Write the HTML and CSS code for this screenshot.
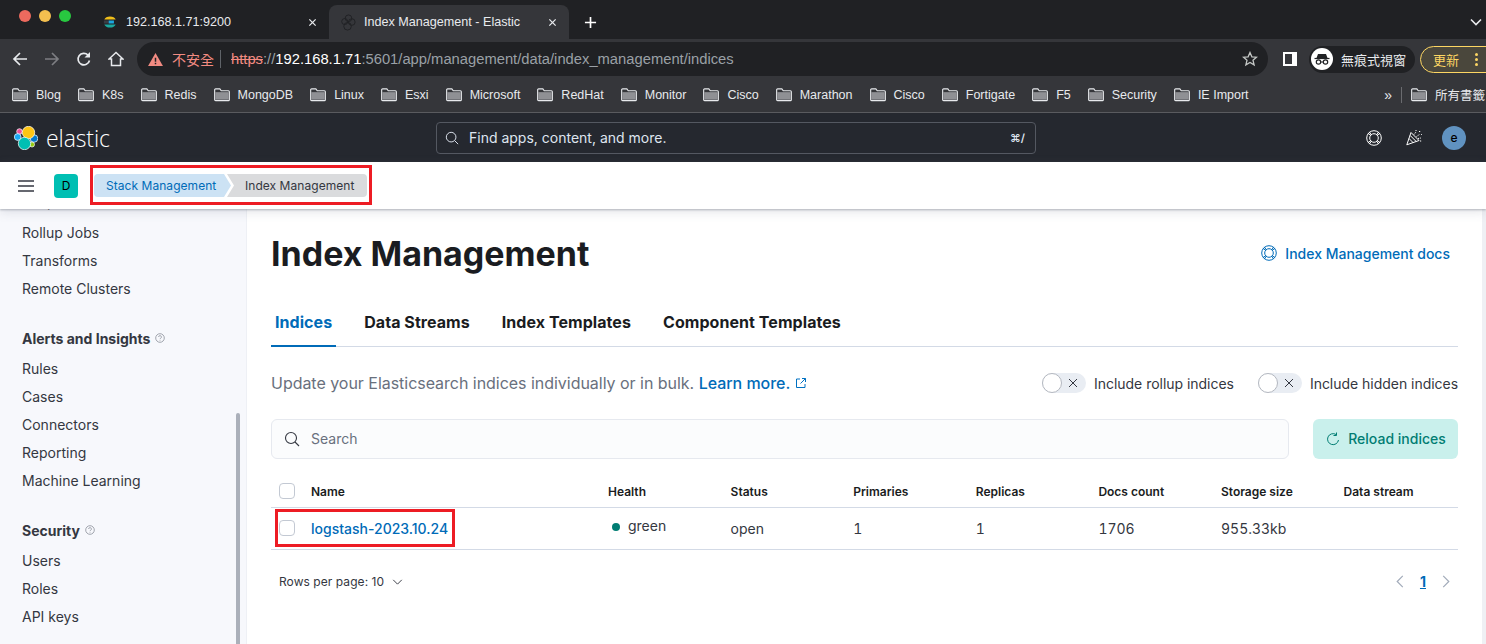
FILE: index.html
```html
<!DOCTYPE html>
<html lang="zh-Hant">
<head>
  <meta charset="UTF-8">
  <title>Index Management - Elastic</title>
  <link rel="stylesheet" href="styles.css">
</head>
<body>
  <!-- browser chrome -->
  <div class="tabbar">
    <div class="lights"><span class="light red"></span><span class="light yellow"></span><span class="light green"></span></div>
    <div class="tab">
      <svg class="favicon" viewBox="0 0 16 16"><path d="M1.500 5.200a6.800 5 0 0 1 13 0z" fill="#f0bf1a"/><path d="M1.500 10.800a6.800 5 0 0 0 13 0z" fill="#1ba9a0"/><path d="M1 6.300h5.500v3.400H1z" fill="#3a3d44"/><path d="M6.500 6.300h6v3.400h-6z" fill="#1ca6e0"/></svg>
      <span class="tab-title">192.168.1.71:9200</span>
      <svg class="tab-close" viewBox="0 0 10 10"><path d="M1.5 1.5l7 7M8.500 1.500l-7 7" stroke="#e8eaed" stroke-width="1.400"/></svg>
    </div>
    <div class="tab active">
      <svg class="favicon" viewBox="0 0 18 18" fill="none" stroke="#202124" stroke-width="1"><circle cx="9" cy="4.500" r="3.500"/><circle cx="5" cy="8" r="3.200"/><circle cx="12.500" cy="8.500" r="3.500"/><circle cx="8" cy="13" r="4"/></svg>
      <span class="tab-title">Index Management - Elastic</span>
      <svg class="tab-close" viewBox="0 0 10 10"><path d="M1.5 1.5l7 7M8.500 1.500l-7 7" stroke="#e8eaed" stroke-width="1.400"/></svg>
    </div>
    <svg class="new-tab" viewBox="0 0 14 14"><path d="M7 1v12M1 7h12" stroke="#fff" stroke-width="1.800"/></svg>
    <svg class="tab-menu" viewBox="0 0 12 8"><path d="M1 1.500l5 5 5-5" fill="none" stroke="#e8eaed" stroke-width="1.600"/></svg>
  </div>

  <div class="toolbar">
    <svg class="nav-icon" viewBox="0 0 16 16"><path d="M15 8H2M8 2L2 8l6 6" fill="none" stroke="#e8eaed" stroke-width="1.700"/></svg>
    <svg class="nav-icon" viewBox="0 0 16 16"><path d="M1 8h13M8 2l6 6-6 6" fill="none" stroke="#7d7e82" stroke-width="1.700"/></svg>
    <svg class="nav-icon" viewBox="0 0 16 16"><path d="M13.500 9.500A5.800 5.800 0 1 1 12 4" fill="none" stroke="#e8eaed" stroke-width="1.700"/><path d="M14 1v5.500H8.500z" fill="#e8eaed"/></svg>
    <svg class="nav-icon" viewBox="0 0 16 16"><path d="M8 1.500L1 8h2.500v6.500h9V8H15z" fill="none" stroke="#e8eaed" stroke-width="1.500"/></svg>
    <div class="omnibox">
      <svg class="warn" viewBox="0 0 16 14"><path d="M8 0l8 14H0z" fill="#f28b82"/><path d="M7.200 5h1.600v4.500H7.200zM7.200 10.500h1.600V12H7.200z" fill="#202124"/></svg>
      <span class="not-secure">不安全</span>
      <span class="omni-sep"></span>
      <span class="url"><s class="https">https</s>://<b class="host">192.168.1.71</b>:5601/app/management/data/index_management/indices</span>
      <svg class="star" viewBox="0 0 16 16"><path d="M8 1.500l1.900 4.300 4.600.4-3.500 3 1.100 4.600L8 11.400l-4.100 2.400L5 9.200l-3.500-3 4.600-.4z" fill="none" stroke="#c4c7c5" stroke-width="1.300"/></svg>
    </div>
    <svg class="panel-icon" viewBox="0 0 14 14"><path d="M0 0h14v14H0z" fill="#fff"/><path d="M2 2h7v10H2z" fill="#35363a"/></svg>
    <div class="incognito">
      <svg class="incognito-icon" viewBox="0 0 22 22"><circle cx="11" cy="11" r="11" fill="#fff"/><path d="M7 6h8l1.500 4h-11z" fill="#202124"/><path d="M3.500 10.500h15" stroke="#202124" stroke-width="1.200"/><circle cx="7.500" cy="14" r="2.200" fill="none" stroke="#202124" stroke-width="1.200"/><circle cx="14.500" cy="14" r="2.200" fill="none" stroke="#202124" stroke-width="1.200"/><path d="M9.700 14h2.600" stroke="#202124"/></svg>
      <span>無痕式視窗</span>
    </div>
    <div class="update">
      <span>更新</span>
      <span class="dots"><i></i><i></i><i></i></span>
    </div>
  </div>

  <div class="bookmarks">
    <span class="bm"><svg class="folder"><use href="#folder"/></svg>Blog</span>
    <span class="bm"><svg class="folder"><use href="#folder"/></svg>K8s</span>
    <span class="bm"><svg class="folder"><use href="#folder"/></svg>Redis</span>
    <span class="bm"><svg class="folder"><use href="#folder"/></svg>MongoDB</span>
    <span class="bm"><svg class="folder"><use href="#folder"/></svg>Linux</span>
    <span class="bm"><svg class="folder"><use href="#folder"/></svg>Esxi</span>
    <span class="bm"><svg class="folder"><use href="#folder"/></svg>Microsoft</span>
    <span class="bm"><svg class="folder"><use href="#folder"/></svg>RedHat</span>
    <span class="bm"><svg class="folder"><use href="#folder"/></svg>Monitor</span>
    <span class="bm"><svg class="folder"><use href="#folder"/></svg>Cisco</span>
    <span class="bm"><svg class="folder"><use href="#folder"/></svg>Marathon</span>
    <span class="bm"><svg class="folder"><use href="#folder"/></svg>Cisco</span>
    <span class="bm"><svg class="folder"><use href="#folder"/></svg>Fortigate</span>
    <span class="bm"><svg class="folder"><use href="#folder"/></svg>F5</span>
    <span class="bm"><svg class="folder"><use href="#folder"/></svg>Security</span>
    <span class="bm"><svg class="folder"><use href="#folder"/></svg>IE Import</span>
    <span class="bm-more">»</span>
    <span class="bm-sep"></span>
    <span class="bm"><svg class="folder"><use href="#folder"/></svg>所有書籤</span>
  </div>

  <svg class="defs">
    <symbol id="folder" viewBox="0 0 17 15">
      <path d="M.7 2.500a1 1 0 0 1 1-1h4.500l1.500 2h7.600a1 1 0 0 1 1 1v8.500a1 1 0 0 1-1 1H1.700a1 1 0 0 1-1-1z" fill="none" stroke="#e8eaed" stroke-width="1.200"/>
      <path d="M1.300 5h14.400v8H1.300z" fill="#8f9094"/>
    </symbol>
    <symbol id="ring" viewBox="0 0 16 16">
      <g fill="none" stroke="currentColor" stroke-width="1">
        <circle cx="8" cy="8" r="7.300"/>
        <circle cx="8" cy="8" r="4.300"/>
        <path d="M3.200 1.900l2.400 3.100M12.800 1.900l-2.400 3.100M3.200 14.100l2.400-3.100M12.800 14.100l-2.400-3.100M1.900 3.200l3.100 2.400M14.100 3.200l-3.100 2.400M1.900 12.800l3.100-2.400M14.100 12.800l-3.100-2.400"/>
      </g>
    </symbol>
    <symbol id="help" viewBox="0 0 10 10">
      <circle cx="5" cy="5" r="4.300" fill="none" stroke="#8a8f99" stroke-width=".8"/>
      <path d="M3.600 4a1.400 1.400 0 1 1 2 1.300c-.4.200-.6.400-.6.900M5 7.200v.6" fill="none" stroke="#8a8f99" stroke-width=".8"/>
    </symbol>
  </svg>

  <!-- kibana -->
  <header class="kbn-header">
    <div class="brand">
      <svg class="logo" viewBox="0 0 24 24" stroke="#fff" stroke-width=".7">
        <circle cx="5.500" cy="5.500" r="2.800" fill="#f04e98"/>
        <circle cx="3.700" cy="11" r="3.400" fill="#1ba9f5"/>
        <circle cx="20" cy="12.500" r="3.800" fill="#0077cc"/>
        <circle cx="14.500" cy="6.500" r="6.200" fill="#fec514"/>
        <circle cx="18" cy="18.500" r="2.500" fill="#93c90e"/>
        <circle cx="10.500" cy="17.500" r="6.200" fill="#00bfb3"/>
      </svg>
      <span class="wordmark">elastic</span>
    </div>
    <div class="global-search">
      <svg class="search-icon" viewBox="0 0 16 16"><circle cx="7" cy="7" r="5.500" fill="none" stroke="#dfe5ef" stroke-width="1.100"/><path d="M11 11l4 4" stroke="#dfe5ef" stroke-width="1.100"/></svg>
      <span class="global-placeholder">Find apps, content, and more.</span>
      <span class="shortcut">⌘/</span>
    </div>
    <div class="header-icons">
      <svg class="hdr-icon"><use href="#ring"/></svg>
      <svg class="hdr-icon" viewBox="0 0 16 16" fill="none" stroke="#fff" stroke-width="1"><path d="M.8 14.800L5 2.500l8 8zM3 8.500l4.500 4.500M4.200 5.500l6 6"/><path d="M8 4.500L10 2M10.500 6.500l3-2M12 8.500l3-.5M9.500.5h1M13 1.500h1.500M15 4.500h.8M14 11h1.500" stroke-dasharray="1.200 1"/></svg>
      <span class="avatar">e</span>
    </div>
  </header>

  <div class="crumb-bar">
    <svg class="burger" viewBox="0 0 16 12"><path d="M0 1h16M0 6h16M0 11h16" stroke="#343741" stroke-width="1.600"/></svg>
    <span class="space-badge">D</span>
    <div class="crumb-frame">
      <span class="crumb first">Stack Management</span>
      <span class="crumb last">Index Management</span>
    </div>
  </div>

  <div class="app">
    <nav class="sidenav">
      <a class="nav-item clipped">Snapshot and Restore</a>
      <a class="nav-item">Rollup Jobs</a>
      <a class="nav-item">Transforms</a>
      <a class="nav-item">Remote Clusters</a>
      <div class="nav-heading">Alerts and Insights <svg class="help"><use href="#help"/></svg></div>
      <a class="nav-item">Rules</a>
      <a class="nav-item">Cases</a>
      <a class="nav-item">Connectors</a>
      <a class="nav-item">Reporting</a>
      <a class="nav-item">Machine Learning</a>
      <div class="nav-heading">Security <svg class="help"><use href="#help"/></svg></div>
      <a class="nav-item">Users</a>
      <a class="nav-item">Roles</a>
      <a class="nav-item">API keys</a>
      <span class="nav-scroll"></span>
    </nav>

    <main class="content">
      <div class="title-row">
        <h1>Index Management</h1>
        <a class="docs-link"><svg class="docs-icon"><use href="#ring"/></svg>Index Management docs</a>
      </div>

      <div class="tabs">
        <span class="page-tab selected">Indices</span>
        <span class="page-tab">Data Streams</span>
        <span class="page-tab">Index Templates</span>
        <span class="page-tab">Component Templates</span>
      </div>

      <div class="desc-row">
        <p class="desc">Update your Elasticsearch indices individually or in bulk. <a class="learn">Learn more.</a><svg class="ext" viewBox="0 0 12 12" fill="none" stroke="#0071c2" stroke-width="1"><path d="M5 2H1.500v8.500H10V7M7 1.500h3.500V5M10.500 1.500L5.500 6.500"/></svg></p>
        <div class="switches">
          <label class="switch"><span class="track"><span class="knob"></span><svg class="x" viewBox="0 0 10 10"><path d="M1 1l8 8M9 1l-8 8" stroke="#343741"/></svg></span>Include rollup indices</label>
          <label class="switch"><span class="track"><span class="knob"></span><svg class="x" viewBox="0 0 10 10"><path d="M1 1l8 8M9 1l-8 8" stroke="#343741"/></svg></span>Include hidden indices</label>
        </div>
      </div>

      <div class="search-row">
        <div class="search-box">
          <svg class="search-icon dark" viewBox="0 0 16 16"><circle cx="7" cy="7" r="5.500" fill="none" stroke="#343741" stroke-width="1.100"/><path d="M11 11l4 4" stroke="#343741" stroke-width="1.100"/></svg>
          Search
        </div>
        <button class="reload">
          <svg class="reload-icon" viewBox="0 0 14 14" fill="none" stroke="#017d73" stroke-width="1"><path d="M12.500 8A5.500 5.500 0 1 1 10 2.500"/><path d="M10.500 .5v3h-3"/></svg>
          Reload indices
        </button>
      </div>

      <table class="indices">
        <thead>
          <tr>
            <th class="check-col"><span class="check"></span></th>
            <th class="name-col">Name</th>
            <th>Health</th>
            <th>Status</th>
            <th>Primaries</th>
            <th>Replicas</th>
            <th>Docs count</th>
            <th>Storage size</th>
            <th>Data stream</th>
          </tr>
        </thead>
        <tbody>
          <tr>
            <td class="check-col"><span class="check"></span></td>
            <td><a class="index-link">logstash-2023.10.24</a></td>
            <td class="health"><span class="dot"></span>green</td>
            <td>open</td>
            <td>1</td>
            <td>1</td>
            <td>1706</td>
            <td>955.33kb</td>
            <td></td>
          </tr>
        </tbody>
      </table>

      <div class="pager">
        <span class="rows">Rows per page: 10
          <svg class="rows-chev" viewBox="0 0 12 7"><path d="M1 1l5 5 5-5" fill="none" stroke="#343741" stroke-width="1.100"/></svg>
        </span>
        <div class="pages">
          <svg class="page-chev" viewBox="0 0 8 14"><path d="M7 1L1 7l6 6" fill="none" stroke="#a2abba" stroke-width="1.300"/></svg>
          <a class="page-num">1</a>
          <svg class="page-chev" viewBox="0 0 8 14"><path d="M1 1l6 6-6 6" fill="none" stroke="#a2abba" stroke-width="1.300"/></svg>
        </div>
      </div>
    </main>
    <span class="page-scroll"></span>
    <span class="mark-row"></span>
  </div>
</body>
</html>
```

FILE: styles.css
```css
* {
  box-sizing: border-box;
}

html, body {
  margin: 0;
  padding: 0;
  height: 644px;
  overflow: hidden;
}

body {
  font-family: Inter, "Noto Sans CJK TC", sans-serif;
  font-size: 14px;
  color: #343741;
  background-color: #fff;
}

svg {
  display: block;
  flex-shrink: 0;
}

.defs {
  width: 0;
  height: 0;
  position: absolute;
}

/* browser chrome */
.tabbar {
  height: 39px;
  background-color: #202124;
  display: flex;
  align-items: flex-end;
  font-family: "Liberation Sans", "Noto Sans CJK TC", sans-serif;
  font-size: 12.6px;
  color: #e8eaed;
}

.lights {
  width: 92px;
  height: 36px;
  padding-left: 19px;
  display: flex;
  gap: 8px;
  align-items: flex-start;
  padding-top: 7px;
}

.light {
  width: 12px;
  height: 12px;
  border-radius: 50%;
}

.red { background-color: #ed6a5e; }
.yellow { background-color: #f4bf4f; }
.green { background-color: #28c840; }

.tab {
  width: 237px;
  height: 34px;
  padding: 0 11px;
  display: flex;
  align-items: center;
  position: relative;
}

.tab .favicon {
  width: 14px;
  height: 14px;
  margin-right: 9px;
}

.tab.active {
  width: 240px;
  background-color: #35363a;
  border-radius: 8px 8px 0 0;
}

.tab.active .favicon {
  width: 17px;
  height: 17px;
  margin-right: 7px;
}

.tab-title {
  flex: 1;
}

.tab-close {
  width: 9px;
  height: 9px;
  margin-right: 1px;
}

.new-tab {
  width: 13px;
  height: 13px;
  margin: 0 0 10px 15px;
}

.tab-menu {
  width: 12px;
  height: 8px;
  margin: 0 4px 13px auto;
}

.toolbar {
  height: 40px;
  background-color: #35363a;
  display: flex;
  align-items: center;
  padding-left: 12px;
  font-family: "Liberation Sans", "Noto Sans CJK TC", sans-serif;
  color: #e8eaed;
  overflow: hidden;
}

.nav-icon {
  width: 16px;
  height: 16px;
  margin-right: 16px;
}

.omnibox {
  width: 1131px;
  height: 34px;
  flex-shrink: 0;
  margin-left: -3px;
  background-color: #202124;
  border-radius: 17px;
  display: flex;
  align-items: center;
  padding: 0 10px 0 11px;
  font-size: 14.75px;
}

.warn {
  width: 15px;
  height: 13px;
}

.not-secure {
  color: #f28b82;
  font-size: 14px;
  margin-left: 9px;
}

.omni-sep {
  width: 1px;
  height: 18px;
  background-color: #5f6368;
  margin: 0 10px 0 6px;
}

.url {
  color: #9aa0a6;
  flex: 1;
}

.https {
  color: #f28b82;
}

.host {
  color: #fff;
  font-weight: normal;
}

.star {
  width: 16px;
  height: 16px;
}

.panel-icon {
  width: 14px;
  height: 14px;
  margin-left: 15px;
}

.incognito {
  width: 106px;
  height: 27px;
  flex-shrink: 0;
  margin-left: 12px;
  background-color: #202124;
  border-radius: 14px;
  display: flex;
  align-items: center;
  padding-left: 2px;
  gap: 8px;
  font-size: 13px;
  white-space: nowrap;
}

.incognito-icon {
  width: 22px;
  height: 22px;
}

.update {
  width: 80px;
  height: 27px;
  margin-left: 5px;
  flex-shrink: 0;
  background-color: #4a473c;
  border: 1px solid #fdd663;
  border-radius: 14px;
  display: flex;
  align-items: center;
  padding-left: 12px;
  gap: 16px;
  color: #fdd663;
  font-size: 13px;
}

.dots {
  display: flex;
  flex-direction: column;
  gap: 2px;
}

.dots i {
  width: 3px;
  height: 3px;
  border-radius: 50%;
  background-color: #fdd663;
}

.bookmarks {
  height: 34px;
  background-color: #35363a;
  display: flex;
  align-items: center;
  padding: 0 1px 2px 12px;
  gap: 17px;
  font-family: "Liberation Sans", "Noto Sans CJK TC", sans-serif;
  font-size: 12.5px;
  color: #e8eaed;
  white-space: nowrap;
  overflow: hidden;
  border-bottom: 1px solid #5a5b5f;
}

.bm {
  display: flex;
  align-items: center;
  gap: 8px;
}

.folder {
  width: 16px;
  height: 15px;
}

.bm-more {
  margin-left: auto;
  font-size: 14px;
}

.bm-sep {
  width: 1px;
  height: 16px;
  background-color: #6a6b6f;
  margin: 0 -8px 0 -8px;
}

/* kibana header */
.kbn-header {
  height: 49px;
  background-color: #25282f;
  display: flex;
  align-items: center;
  padding-left: 14px;
  color: #fff;
}

.brand {
  display: flex;
  align-items: center;
  width: 422px;
  gap: 8px;
}

.logo {
  width: 24px;
  height: 24px;
}

.wordmark {
  font-family: "Open Sans", sans-serif;
  font-size: 23px;
  font-weight: 300;
  letter-spacing: -0.1px;
  line-height: 24px;
}

.global-search {
  width: 600px;
  height: 32px;
  border: 1px solid #545861;
  border-radius: 4px;
  display: flex;
  align-items: center;
  padding: 0 10px 0 8px;
  color: #dfe5ef;
}

.search-icon {
  width: 14px;
  height: 14px;
  margin-right: 10px;
}

.global-placeholder {
  flex: 1;
}

.shortcut {
  font-size: 11px;
  font-weight: 600;
}

.header-icons {
  margin-left: auto;
  display: flex;
  align-items: center;
  padding-right: 20px;
  gap: 24px;
}

.hdr-icon {
  width: 16px;
  height: 16px;
  color: #fff;
}

.avatar {
  width: 24px;
  height: 24px;
  margin-left: -4px;
  border-radius: 50%;
  background-color: #6092c0;
  color: #000;
  font-size: 12px;
  font-weight: 500;
  display: flex;
  align-items: center;
  justify-content: center;
}

/* breadcrumbs */
.crumb-bar {
  height: 47px;
  background-color: #fff;
  display: flex;
  align-items: center;
  padding-left: 18px;
  position: relative;
  z-index: 2;
  box-shadow: 0 1px 2px rgba(105, 112, 125, 0.45), 0 3px 10px rgba(105, 112, 125, 0.18);
}

.burger {
  width: 16px;
  height: 12px;
  margin-right: 20px;
}

.space-badge {
  width: 24px;
  height: 24px;
  border-radius: 4px;
  background-color: #00bfb3;
  color: #000;
  font-size: 12px;
  display: flex;
  align-items: center;
  justify-content: center;
  margin-right: 12px;
}

.crumb-frame {
  display: flex;
  height: 40px;
  width: 282px;
  border: 3px solid #ed1c24;
  padding: 6px 0 0 1px;
  margin-bottom: 1px;
  font-size: 12px;
  letter-spacing: 0.05px;
}

.crumb {
  height: 23px;
  display: flex;
  align-items: center;
}

.first {
  width: 137px;
  padding-left: 12px;
  color: #006bb8;
  background-color: #cce2f4;
  border-radius: 4px 0 0 4px;
  clip-path: polygon(0 0, 130px 0, 137px 50%, 130px 100%, 0 100%);
}

.last {
  flex: 1;
  margin-left: -4px;
  padding-left: 18px;
  background-color: #dadbdd;
  border-radius: 0 4px 4px 0;
  clip-path: polygon(0 0, 100% 0, 100% 100%, 0 100%, 7px 50%);
  margin-right: 2px;
}

/* page body */
.app {
  height: 435px;
  display: flex;
  position: relative;
  overflow: hidden;
}

.sidenav {
  width: 247px;
  flex-shrink: 0;
  margin-top: -21px;
  padding-left: 22px;
  background-color: #f7f8fc;
  border-right: 1px solid #eef0f5;
  position: relative;
}

.nav-item {
  display: block;
  height: 28px;
  line-height: 28px;
}

/* only the tail of this row shows under the bar */
.nav-item.clipped {
  height: 31px;
}

.nav-heading {
  height: 28px;
  margin: 21px 0 3px;
  font-weight: 700;
  color: #343741;
  display: flex;
  align-items: center;
  gap: 5px;
}

.help {
  width: 10px;
  height: 10px;
}

.nav-scroll {
  position: absolute;
  left: 236px;
  top: 225px;
  width: 4px;
  height: 240px;
  background-color: #abb0ba;
  border-radius: 2px;
}

.content {
  flex: 1;
  padding: 25px 24px 0;
  min-width: 0;
}

.page-scroll {
  width: 4px;
  flex-shrink: 0;
  background-color: #eff0f4;
}

.title-row {
  display: flex;
  justify-content: space-between;
  align-items: center;
  height: 40px;
}

h1 {
  margin: 0;
  font-size: 34px;
  font-weight: 700;
  color: #1a1c21;
  line-height: 40px;
}

.docs-link {
  display: flex;
  align-items: center;
  gap: 8px;
  color: #006bb8;
  font-weight: 500;
  padding: 0 8px 2px 0;
}

.docs-icon {
  width: 16px;
  height: 16px;
  color: #006bb8;
}

.tabs {
  height: 48px;
  margin-top: 25px;
  display: flex;
  gap: 24px;
  border-bottom: 1px solid #d3dae6;
}

.page-tab {
  padding: 0 4px;
  height: 48px;
  line-height: 47px;
  font-size: 16px;
  font-weight: 700;
  letter-spacing: 0.06px;
  color: #1a1c21;
}

.page-tab.selected {
  color: #006bb8;
  border-bottom: 2px solid #006bb8;
}

.desc-row {
  height: 20px;
  margin-top: 26px;
  display: flex;
  align-items: center;
  justify-content: space-between;
}

.desc {
  margin: 0;
  font-size: 16px;
  color: #69707d;
  display: flex;
  align-items: center;
  white-space: pre;
  letter-spacing: -0.03px;
}

.learn {
  color: #006bb8;
  font-weight: 500;
}

.ext {
  width: 12px;
  height: 12px;
  margin-left: 5px;
}

.switches {
  display: flex;
  gap: 24px;
}

.switch {
  display: flex;
  align-items: center;
  gap: 8px;
  color: #343741;
  letter-spacing: -0.03px;
}

.track {
  width: 44px;
  height: 20px;
  border-radius: 10px;
  background-color: #e9edf3;
  display: flex;
  align-items: center;
}

.knob {
  width: 20px;
  height: 20px;
  border-radius: 50%;
  background-color: #fff;
  border: 1px solid #b4b8c0;
}

.x {
  width: 10px;
  height: 10px;
  margin-left: 6px;
}

.search-row {
  margin-top: 26px;
  display: flex;
  gap: 24px;
}

.search-box {
  flex: 1;
  height: 40px;
  display: flex;
  align-items: center;
  padding: 0 0 1px 12px;
  background-color: #fbfcfd;
  border: 1px solid #e6e9ef;
  border-radius: 6px;
  color: #69707d;
}

.search-icon.dark {
  width: 16px;
  height: 16px;
  margin-right: 11px;
}

.reload {
  width: 145px;
  height: 40px;
  border: none;
  border-radius: 6px;
  background-color: #c9f0ec;
  color: #017d73;
  font-family: inherit;
  font-size: 14px;
  font-weight: 500;
  display: flex;
  align-items: center;
  justify-content: center;
  gap: 8px;
  padding: 0 0 1px 1px;
}

.reload-icon {
  width: 14px;
  height: 14px;
}

.indices {
  width: 100%;
  margin-top: 20px;
  border-collapse: collapse;
  table-layout: fixed;
}

.indices th,
.indices td {
  padding: 0 8px;
  text-align: left;
  border-bottom: 1px solid #d3dae6;
}

.indices th {
  height: 28px;
  padding-bottom: 3px;
  font-size: 12px;
  font-weight: 600;
  color: #1a1c21;
  width: 122.6px;
}

.indices td {
  height: 42px;
  font-feature-settings: "tnum";
}

.indices .check-col {
  width: 32px;
}

.indices .name-col {
  width: 297px;
}

.check {
  display: block;
  width: 16px;
  height: 16px;
  border: 1px solid #c3c9d3;
  border-radius: 4px;
  background-color: #fff;
}

.index-link {
  color: #006bb8;
  font-weight: 500;
  font-feature-settings: normal;
}

.indices .health {
  padding-bottom: 5px;
}

.dot {
  display: inline-block;
  width: 8px;
  height: 8px;
  border-radius: 50%;
  background-color: #017d73;
  margin: 0 8px 0 4px;
}

.pager {
  margin-top: 20px;
  height: 24px;
  display: flex;
  align-items: center;
  justify-content: space-between;
  padding: 0 8px;
  font-size: 12px;
}

.rows {
  display: flex;
  align-items: center;
  gap: 8px;
  letter-spacing: 0.06px;
}

.rows-chev {
  width: 11px;
  height: 6px;
}

.pages {
  display: flex;
  align-items: center;
  gap: 16px;
}

.page-chev {
  width: 8px;
  height: 13px;
}

.page-num {
  color: #006bb8;
  font-size: 14px;
  font-weight: 700;
  text-decoration: underline;
}

/* red annotation around the row */
.mark-row {
  position: absolute;
  left: 275px;
  top: 300px;
  width: 180px;
  height: 38px;
  border: 3px solid #ed1c24;
}
```
